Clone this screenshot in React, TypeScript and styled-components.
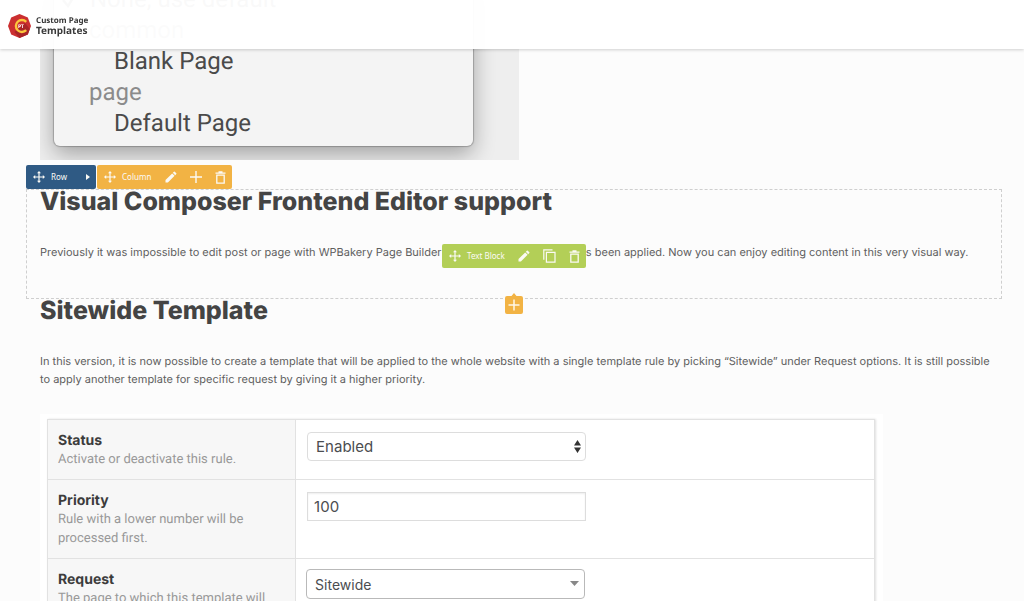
import React from "react";
import styled, { createGlobalStyle } from "styled-components";

const GlobalStyle = createGlobalStyle`
  *, *::before, *::after { box-sizing: border-box; }
  body {
    margin: 0;
    background: #fcfcfc;
    color: #5f5f5f;
    font: 12px/18px Roboto, "Liberation Sans", sans-serif;
    text-rendering: geometricPrecision;
  }
  h1, h2, p { margin: 0; }
`;

const Shell = styled.div`
  height: 100vh;
  overflow: hidden;
`;

const Header = styled.header`
  position: fixed;
  inset: 0 0 auto 0;
  z-index: 10;
  height: 49px;
  padding: 3px 8px 0;
  display: flex;
  align-items: center;
  background: rgba(255, 255, 255, 0.97);
  box-shadow: 0 1px 3px rgba(0, 0, 0, 0.18);
`;

const Brand = styled.a`
  display: flex;
  align-items: center;
  gap: 5px;
  color: #3a3a3a;
  text-decoration: none;
  font-family: "Noto Sans", "Open Sans", sans-serif;
  font-weight: 700;
`;

const BrandName = styled.span<{ $size: number }>`
  display: block;
  font-size: ${(p) => p.$size}px;
  line-height: ${(p) => p.$size}px;
`;

const Page = styled.main`
  padding: 0 22px 0 26px;
`;

const MenuShot = styled.section`
  width: 479px;
  height: 160px;
  margin: 0 14px 5px;
  padding: 0 46px 14px 14px;
  display: flex;
  flex-direction: column;
  justify-content: flex-end;
  overflow: hidden;
  background: #eeeeee;
`;

const Menu = styled.ul`
  margin: 0;
  padding: 0 0 7px;
  list-style: none;
  background: #f4f4f4;
  border-radius: 0 0 6px 6px;
  box-shadow: 0 0 1px 1px rgba(0, 0, 0, 0.22), 0 8px 22px rgba(0, 0, 0, 0.32);
  font-size: 24px;
  line-height: 31px;
`;

const MenuItem = styled.li<{ $group?: boolean }>`
  height: 31px;
  padding-left: ${(p) => (p.$group ? 35 : 60)}px;
  color: ${(p) => (p.$group ? "#8b8b8b" : "#4a4a4a")};
`;

const CheckedItem = styled(MenuItem)`
  display: flex;
  align-items: center;
  gap: 12px;
  padding-left: 8px;
`;

const Controls = styled.div`
  display: flex;
  gap: 1px;
`;

const Toolbar = styled.div<{ $color: string; $width: number }>`
  display: flex;
  align-items: center;
  justify-content: space-between;
  width: ${(p) => p.$width}px;
  height: 24px;
  padding: 0 6px 0 7px;
  border-radius: 2px;
  background: ${(p) => p.$color};
`;

const BlockToolbar = styled(Toolbar)`
  position: absolute;
  top: 54px;
  left: 50%;
  transform: translateX(-50%);
`;

const ToolButton = styled.button`
  display: flex;
  align-items: center;
  gap: 6px;
  padding: 0;
  border: 0;
  background: none;
  color: #fbfaf5;
  font: 8px/12px "Noto Sans", "Open Sans", sans-serif;
  cursor: pointer;
`;

const Actions = styled.div`
  display: flex;
  gap: 13px;
`;

const Block = styled.section`
  position: relative;
  height: 110px;
  padding: 0 13px;
  border: 1px dashed #cfcfcf;
`;

const Heading = styled.h2`
  color: #444444;
  font: 800 25px/24px Inter, Roboto, sans-serif;
`;

const Text = styled.p`
  padding-top: 29px;
  font: 11px/18px Inter, Roboto, sans-serif;
`;

const AddButton = styled.button`
  position: absolute;
  bottom: -16px;
  left: 50%;
  transform: translateX(-50%);
  display: flex;
  padding: 0;
  border: 0;
  background: none;
`;

const Article = styled.section`
  padding: 0 0 0 14px;
`;

const RuleFrame = styled.div`
  max-width: 843px;
  margin-top: 26px;
  padding: 5px 8px 0 7px;
  background: #ffffff;
`;

const RuleTable = styled.table`
  width: 100%;
  border-collapse: collapse;
  table-layout: fixed;
  background: #ffffff;
  border: 1px solid #e0e0e0;
  box-shadow: 1px 0 2px rgba(0, 0, 0, 0.12);
`;

const LabelCell = styled.th`
  width: 30%;
  padding: 11px 20px 10px 10px;
  border: 1px solid #e2e2e2;
  background: #f7f7f7;
  color: #999999;
  font: 400 13px/19px Roboto, sans-serif;
  text-align: left;
  vertical-align: top;
`;

const Label = styled.label`
  display: block;
  color: #3c3c3c;
  font: 700 14px/19px Inter, sans-serif;
`;

const FieldCell = styled.td<{ $raised?: boolean }>`
  padding: ${(p) => (p.$raised ? "10px 10px 0" : "12px 11px 0")};
  border: 1px solid #e2e2e2;
  vertical-align: top;
`;

const Field = styled.div`
  position: relative;
  width: 279px;
  max-width: 100%;
  svg { position: absolute; right: 5px; top: 7px; pointer-events: none; }
`;

const Select = styled.select<{ $strong?: boolean }>`
  appearance: none;
  display: block;
  width: 100%;
  height: ${(p) => (p.$strong ? 30 : 29)}px;
  padding: 0 8px;
  border: 1px solid ${(p) => (p.$strong ? "#b9b9b9" : "#dddddd")};
  border-radius: 4px;
  background: #ffffff;
  color: #4b4d50;
  font: ${(p) => (p.$strong ? 14 : 15)}px Inter, sans-serif;
`;

const Input = styled.input`
  display: block;
  width: 100%;
  height: 29px;
  padding: 0 6px;
  border: 1px solid #dddddd;
  box-shadow: inset 0 1px 2px rgba(0, 0, 0, 0.07);
  color: #4b4d50;
  font: 15px Inter, sans-serif;
`;

const MoveIcon = () => (
  <svg width="12" height="12" viewBox="0 0 12 12" fill="currentColor">
    <path d="M5.400 2.200v3.200H2.200V4L0 6l2.200 2V6.600h3.200v3.200H4L6 12l2-2.200H6.600V6.600h3.200V8L12 6 9.800 4v1.400H6.600V2.200H8L6 0 4 2.200z" />
  </svg>
);
const PencilIcon = () => (
  <svg width="12" height="12" viewBox="0 0 12 12" fill="currentColor">
    <path d="M.5 9.100v2.400h2.400l6.700-6.700-2.400-2.400zM11.300 3.100a.65.65 0 0 0 0-.9L9.800.7a.65.65 0 0 0-.9 0L7.800 1.800l2.400 2.400z" />
  </svg>
);
const PlusIcon = () => (
  <svg width="12" height="12" viewBox="0 0 12 12" fill="currentColor">
    <path d="M5.300 0h1.400v5.300H12v1.400H6.700V12H5.300V6.700H0V5.300h5.300z" />
  </svg>
);
const TrashIcon = () => (
  <svg width="11" height="13" viewBox="0 0 11 13" fill="none" stroke="currentColor" strokeWidth="1.300">
    <path d="M.5 2.100h10M3.500 1h4M1.800 4.200h7.400v7.900H1.800z" />
  </svg>
);
const CopyIcon = () => (
  <svg width="13" height="14" viewBox="0 0 13 14" fill="none" stroke="currentColor" strokeWidth="1.200">
    <path d="M.8 10.800V.8h8.700M3.400 3.300h8.600v9.900H3.400z" />
  </svg>
);
const CaretIcon = () => (
  <svg width="4" height="6" viewBox="0 0 4 6" fill="currentColor">
    <path d="M0 0l4 3-4 3z" />
  </svg>
);
const CheckIcon = () => (
  <svg width="16" height="16" viewBox="0 0 16 16" fill="none" stroke="currentColor" strokeWidth="2.500">
    <path d="M1 8l5 6L14 1" />
  </svg>
);
const AddIcon = () => (
  <svg width="18" height="21" viewBox="0 0 18 21">
    <path d="M2 3h4.500L9 0l2.500 3H16a2 2 0 0 1 2 2v14a2 2 0 0 1-2 2H2a2 2 0 0 1-2-2V5a2 2 0 0 1 2-2z" fill="#f2b344" />
    <path d="M9 6.500v11M3.500 12h11" stroke="#fff8e8" strokeWidth="1.500" />
  </svg>
);
const LogoIcon = () => (
  <svg width="23" height="24" viewBox="0 0 23 24" aria-hidden="true">
    <path d="M11.500 0l8.300 3.500L23 12l-3.200 8.500L11.500 24l-8.300-3.500L0 12l3.200-8.500z" fill="#cb2f30" />
    <path d="M17 9l4.800 6-2 5.500-8.300 3.500-5-6z" fill="#a82427" />
    <path d="M18.200 7.800A6 6 0 1 0 18.200 16.200" fill="none" stroke="#fcc73c" strokeWidth="2.400" />
    <text x="10" y="14" fill="#ffffff" fontFamily="Noto Sans" fontWeight="700" fontSize="5">PT</text>
  </svg>
);
const UpDownIcon = () => (
  <svg width="7" height="15" viewBox="0 0 7 15" fill="#333333">
    <path d="M3.500 1L7 6.500H0zM3.500 14L0 8.500h7z" />
  </svg>
);
const DownIcon = () => (
  <svg width="10" height="15" viewBox="0 0 10 15" fill="#888888">
    <path d="M0 5h9l-4.500 5z" />
  </svg>
);

export default function App() {
  return (
    <Shell>
      <GlobalStyle />
      <Header>
        <Brand href="#">
          <LogoIcon />
          <span>
            <BrandName $size={8}>Custom Page</BrandName>
            <BrandName $size={10}>Templates</BrandName>
          </span>
        </Brand>
      </Header>
      <Page>
        <MenuShot>
          <Menu>
            <CheckedItem><CheckIcon />None, use default</CheckedItem>
            <MenuItem $group>common</MenuItem>
            <MenuItem>Blank Page</MenuItem>
            <MenuItem $group>page</MenuItem>
            <MenuItem>Default Page</MenuItem>
          </Menu>
        </MenuShot>
        <Controls>
          <Toolbar $color="#2f5a84" $width={70}>
            <ToolButton><MoveIcon />Row</ToolButton>
            <ToolButton aria-label="Expand row"><CaretIcon /></ToolButton>
          </Toolbar>
          <Toolbar $color="#f2b344" $width={135}>
            <ToolButton><MoveIcon />Column</ToolButton>
            <Actions>
              <ToolButton aria-label="Edit column"><PencilIcon /></ToolButton>
              <ToolButton aria-label="Add element"><PlusIcon /></ToolButton>
              <ToolButton aria-label="Delete column"><TrashIcon /></ToolButton>
            </Actions>
          </Toolbar>
        </Controls>
        <Block>
          <Heading>Visual Composer Frontend Editor support</Heading>
          <Text>
            Previously it was impossible to edit post or page with WPBakery Page Builder if custom page template has been applied. Now you can enjoy editing content in this very visual way.
          </Text>
          <BlockToolbar $color="#b3cf57" $width={144}>
            <ToolButton><MoveIcon />Text Block</ToolButton>
            <Actions>
              <ToolButton aria-label="Edit text block"><PencilIcon /></ToolButton>
              <ToolButton aria-label="Clone text block"><CopyIcon /></ToolButton>
              <ToolButton aria-label="Delete text block"><TrashIcon /></ToolButton>
            </Actions>
          </BlockToolbar>
          <AddButton aria-label="Add block"><AddIcon /></AddButton>
        </Block>
        <Article>
          <Heading>Sitewide Template</Heading>
          <Text>
            In this version, it is now possible to create a template that will be applied to the whole website with a single template rule by picking “Sitewide” under Request options. It is still possible to apply another template for specific request by giving it a higher priority.
          </Text>
          <RuleFrame>
            <RuleTable>
              <tbody>
                <tr>
                  <LabelCell scope="row"><Label htmlFor="status">Status</Label>Activate or deactivate this rule.</LabelCell>
                  <FieldCell>
                    <Field>
                      <Select id="status" defaultValue="Enabled"><option>Enabled</option><option>Disabled</option></Select>
                      <UpDownIcon />
                    </Field>
                  </FieldCell>
                </tr>
                <tr>
                  <LabelCell scope="row"><Label htmlFor="priority">Priority</Label>Rule with a lower number will be processed first.</LabelCell>
                  <FieldCell><Field><Input id="priority" type="text" defaultValue="100" /></Field></FieldCell>
                </tr>
                <tr>
                  <LabelCell scope="row"><Label htmlFor="request">Request</Label>The page to which this template will be applied.</LabelCell>
                  <FieldCell $raised>
                    <Field>
                      <Select id="request" $strong defaultValue="Sitewide"><option>Sitewide</option></Select>
                      <DownIcon />
                    </Field>
                  </FieldCell>
                </tr>
              </tbody>
            </RuleTable>
          </RuleFrame>
        </Article>
      </Page>
    </Shell>
  );
}
